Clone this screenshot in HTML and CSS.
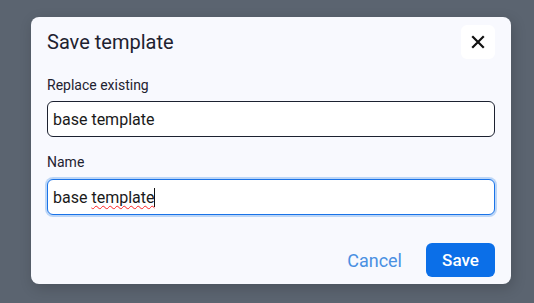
FILE: index.html
```html
<!DOCTYPE html>
<html>
<head>
<meta charset="utf-8">
<link rel="stylesheet" href="styles.css">
</head>
<body>
<div class="backdrop">
  <div class="dialog">
    <div class="header">
      <div class="title">Save template</div>
      <button class="close" aria-label="Close">
        <svg width="14" height="14" viewBox="0 0 14 14"><path d="M2 2L12 12M12 2L2 12" stroke="#111" stroke-width="2.2" stroke-linecap="square"/></svg>
      </button>
    </div>
    <div class="field">
      <div class="label">Replace existing</div>
      <div class="input">base template</div>
    </div>
    <div class="field">
      <div class="label">Name</div>
      <div class="input focused">base <span class="spell">template</span><span class="caret"></span></div>
    </div>
    <div class="actions">
      <button class="cancel">Cancel</button>
      <button class="save">Save</button>
    </div>
  </div>
</div>
</body>
</html>
```

FILE: styles.css
```css
html, body {
  margin: 0;
  padding: 0;
  width: 534px;
  height: 303px;
  overflow: hidden;
  background: #5b6470;
  font-family: Roboto, "Liberation Sans", sans-serif;
}
.backdrop {
  padding: 17px 23px 0 31px;
}
.dialog {
  box-sizing: border-box;
  width: 480px;
  height: 267px;
  background: #f8f9fe;
  border-radius: 8px;
  box-shadow: 2px 4px 14px rgba(0, 0, 0, 0.18);
  padding: 8px 16px 7px 16px;
  display: flex;
  flex-direction: column;
}
.header {
  display: flex;
  align-items: center;
  justify-content: space-between;
  height: 34px;
}
.title {
  font-size: 20px;
  color: #1e2230;
  line-height: 24px;
}
.close {
  width: 34px;
  height: 34px;
  border: none;
  background: #ffffff;
  border-radius: 6px;
  padding: 0;
  display: flex;
  align-items: center;
  justify-content: center;
}
.field {
  display: flex;
  flex-direction: column;
}
.field:nth-of-type(2) {
  margin-top: 16px;
}
.field + .field {
  margin-top: 15px;
}
.label {
  font-size: 14px;
  line-height: 20px;
  color: #1e2230;
  margin-bottom: 6px;
}
.input {
  box-sizing: border-box;
  height: 36px;
  border: 1px solid #1c2130;
  border-radius: 6px;
  background: #ffffff;
  font-size: 16px;
  color: #1a1a1a;
  padding: 0 5px;
  display: flex;
  align-items: center;
  white-space: pre;
}
.input.focused {
  border-color: #1a73e8;
  box-shadow: 0 0 0 2px #bcd6f7;
  margin-top: 1px;
}
.spell {
  text-decoration-line: underline;
  text-decoration-style: wavy;
  text-decoration-color: #ff2222;
  text-decoration-thickness: 1.4px;
  text-decoration-skip-ink: none;
  text-underline-offset: 2px;
}
.caret {
  display: inline-block;
  width: 1px;
  height: 19px;
  background: #111;
}
.actions {
  margin-top: auto;
  display: flex;
  justify-content: flex-end;
  align-items: center;
  gap: 24px;
}
.cancel {
  border: none;
  background: none;
  font-family: Roboto, "Liberation Sans", sans-serif;
  font-size: 18px;
  color: #4a90e2;
  padding: 0;
}
.save {
  width: 69px;
  height: 34px;
  border: none;
  border-radius: 6px;
  background: #0b6fe8;
  color: #ffffff;
  font-family: Roboto, "Liberation Sans", sans-serif;
  font-size: 17px;
  font-weight: 500;
  padding: 0;
}
```
